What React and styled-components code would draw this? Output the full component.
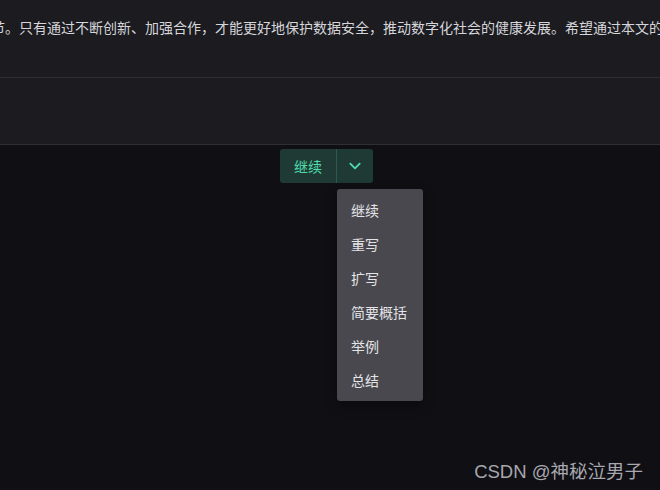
import React from 'react'
import styled, { createGlobalStyle } from 'styled-components'

const actions = ['继续', '重写', '扩写', '简要概括', '举例', '总结']

const paragraph = '节。只有通过不断创新、加强合作，才能更好地保护数据安全，推动数字化社会的健康发展。希望通过本文的介绍，读者能够对数据安全有更深入的认识。'

const App = () => (
  <Page>
    <GlobalStyle />
    <Article>
      <Line>{paragraph}</Line>
    </Article>
    <Band />
    <Main>
      <SplitWrap>
        <SplitButton>
          <MainAction>继续</MainAction>
          <Toggle aria-label="more">
            <svg width="14" height="14" viewBox="0 0 14 14" fill="none">
              <path d="M2.3 4.6 L7 9.3 L11.7 4.6" stroke="#4fdcaa" strokeWidth="1.8" strokeLinecap="round" strokeLinejoin="round" />
            </svg>
          </Toggle>
        </SplitButton>
        <Menu>
          {actions.map(a => <MenuItem key={a}>{a}</MenuItem>)}
        </Menu>
      </SplitWrap>
    </Main>
    <Watermark>CSDN @神秘泣男子</Watermark>
  </Page>
)

const GlobalStyle = createGlobalStyle`
    html, body {
      margin: 0;
      background: #101014;
    }
    body {
      font-family: "Noto Sans CJK SC", "Noto Sans", sans-serif;
    }
  `,
  Page = styled.div`
    position: relative;
    width: 660px;
    height: 490px;
    overflow: hidden;
    background: #101014;
  `,
  Article = styled.div`
    height: 78px;
    box-sizing: border-box;
    padding-top: 16px;
    background: #1b1b20;
    border-bottom: 1px solid #2e2e33;
    overflow: hidden;
  `,
  Line = styled.div`
    margin-left: -9px;
    white-space: nowrap;
    font-size: 14px;
    line-height: 22px;
    color: #d6d6da;
  `,
  Band = styled.div`
    height: 66px;
    background: #1b1b20;
    border-bottom: 1px solid #2e2e33;
  `,
  Main = styled.div`
    display: flex;
    justify-content: center;
    padding: 4px 7px 0 0;
  `,
  SplitWrap = styled.div`
    position: relative;
  `,
  SplitButton = styled.div`
    display: flex;
    height: 34px;
    border-radius: 3px;
    overflow: hidden;
    background: #1f3a35;
  `,
  MainAction = styled.button`
    width: 57px;
    border: 0;
    background: transparent;
    color: #4fdcaa;
    font-family: inherit;
    font-size: 14px;
    padding: 0;
    border-right: 1px solid #2c5a4d;
  `,
  Toggle = styled.button`
    width: 36px;
    border: 0;
    background: transparent;
    display: flex;
    align-items: center;
    justify-content: center;
    padding: 0;
  `,
  Menu = styled.div`
    position: absolute;
    left: 57px;
    top: 40px;
    width: 86px;
    padding: 4px 0;
    background: #48484e;
    border-radius: 3px;
    box-shadow: 0 4px 12px rgba(0, 0, 0, 0.35);
  `,
  MenuItem = styled.div`
    height: 34px;
    line-height: 34px;
    padding-left: 14px;
    font-size: 14px;
    color: #e4e4e8;
    white-space: nowrap;
  `,
  Watermark = styled.div`
    position: absolute;
    right: 17px;
    bottom: 7px;
    font-family: "Liberation Sans", "Noto Sans CJK SC", sans-serif;
    font-size: 18.5px;
    color: rgba(220, 220, 225, 0.75);
  `

export default App
